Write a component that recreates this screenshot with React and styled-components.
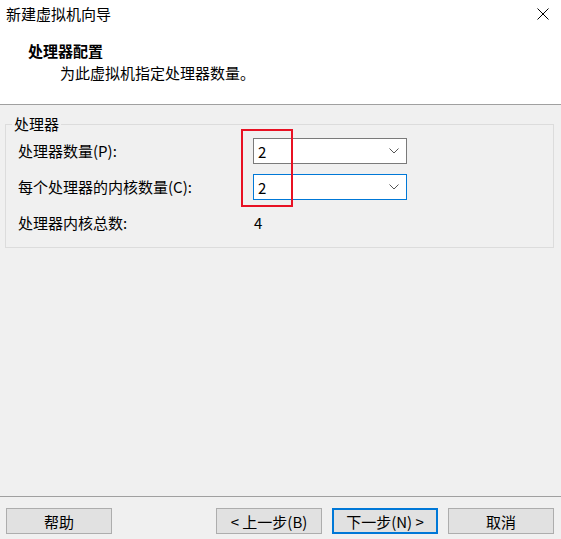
import React from "react";
import styled, { createGlobalStyle } from "styled-components";

const GlobalStyle = createGlobalStyle`
  html, body {
    margin: 0;
    padding: 0;
    background: #f0f0f0;
  }
  body {
    font-family: "Noto Sans CJK SC", "Microsoft YaHei", sans-serif;
    font-size: 15px;
    color: #000000;
  }
`;

const Window = styled.div`
  position: relative;
  width: 561px;
  height: 539px;
  display: flex;
  flex-direction: column;
  background: #f0f0f0;
  overflow: hidden;
`;

const Header = styled.div`
  height: 104px;
  background: #ffffff;
  border-bottom: 1px solid #a0a0a0;
  display: flex;
  flex-direction: column;
`;

const TitleBar = styled.div`
  height: 28px;
  display: flex;
  align-items: center;
  justify-content: space-between;
  padding: 0 11px 0 6px;
  line-height: 28px;
`;

const CloseButton = styled.button`
  width: 14px;
  height: 14px;
  padding: 0;
  border: none;
  background: transparent;
  display: flex;
  align-items: center;
  justify-content: center;
`;

const Heading = styled.div`
  margin-top: 12px;
  padding-left: 28px;
  line-height: 22px;
  font-weight: 700;
`;

const Subtitle = styled.div`
  padding-left: 60px;
  line-height: 22px;
`;

const Body = styled.div`
  flex: 1;
  padding: 10px 7px 0 5px;
`;

const GroupBox = styled.fieldset`
  margin: 0;
  padding: 5px 0 11px 6px;
  border: 1px solid #dcdcdc;
  min-width: 0;
`;

const Legend = styled.legend`
  padding: 0 2px;
  line-height: 18px;
`;

const Grid = styled.div`
  display: grid;
  grid-template-columns: 235px 154px;
  grid-auto-rows: 26px;
  row-gap: 10px;
  padding-left: 6px;
  align-items: center;
`;

const Label = styled.span`
  line-height: 26px;
`;

const Value = styled.span`
  padding-left: 1px;
  line-height: 26px;
`;

const Combo = styled.div`
  box-sizing: border-box;
  height: 26px;
  display: flex;
  align-items: center;
  justify-content: space-between;
  padding: 0 7px 0 4px;
  background: #ffffff;
  border: 1px solid ${(p) => (p.$focused ? "#0078d7" : "#7a7a7a")};
`;

const Highlight = styled.div`
  position: absolute;
  left: 241px;
  top: 129px;
  width: 52px;
  height: 78px;
  box-sizing: border-box;
  border: 2px solid #e81123;
  pointer-events: none;
`;

const Footer = styled.div`
  border-top: 1px solid #a0a0a0;
  padding: 11px 7px 5px 6px;
  display: flex;
  justify-content: space-between;
`;

const ButtonGroup = styled.div`
  display: flex;
  gap: 10px;
`;

const Button = styled.button`
  box-sizing: border-box;
  width: 106px;
  height: 26px;
  padding: 0;
  font-family: inherit;
  font-size: 15px;
  color: #000000;
  background: #e1e1e1;
  border: ${(p) => (p.$default ? "2px solid #0078d7" : "1px solid #adadad")};
`;

const Chevron = () => (
  <svg width="10" height="6" viewBox="0 0 10 6">
    <polyline points="0.5,0.5 5,5 9.5,0.5" fill="none" stroke="#555" strokeWidth="1" />
  </svg>
);

const CloseIcon = () => (
  <svg width="12" height="12" viewBox="0 0 12 12">
    <path d="M0.5 0.5 L11.5 11.5 M11.5 0.5 L0.5 11.5" stroke="#000" strokeWidth="1" />
  </svg>
);

export default function App() {
  return (
    <>
      <GlobalStyle />
      <Window>
        <Header>
          <TitleBar>
            <span>新建虚拟机向导</span>
            <CloseButton>
              <CloseIcon />
            </CloseButton>
          </TitleBar>
          <Heading>处理器配置</Heading>
          <Subtitle>为此虚拟机指定处理器数量。</Subtitle>
        </Header>

        <Body>
          <GroupBox>
            <Legend>处理器</Legend>
            <Grid>
              <Label>处理器数量(P):</Label>
              <Combo>
                <span>2</span>
                <Chevron />
              </Combo>
              <Label>每个处理器的内核数量(C):</Label>
              <Combo $focused>
                <span>2</span>
                <Chevron />
              </Combo>
              <Label>处理器内核总数:</Label>
              <Value>4</Value>
            </Grid>
          </GroupBox>
        </Body>

        <Footer>
          <Button>帮助</Button>
          <ButtonGroup>
            <Button>&lt; 上一步(B)</Button>
            <Button $default>下一步(N) &gt;</Button>
            <Button>取消</Button>
          </ButtonGroup>
        </Footer>

        <Highlight />
      </Window>
    </>
  );
}
